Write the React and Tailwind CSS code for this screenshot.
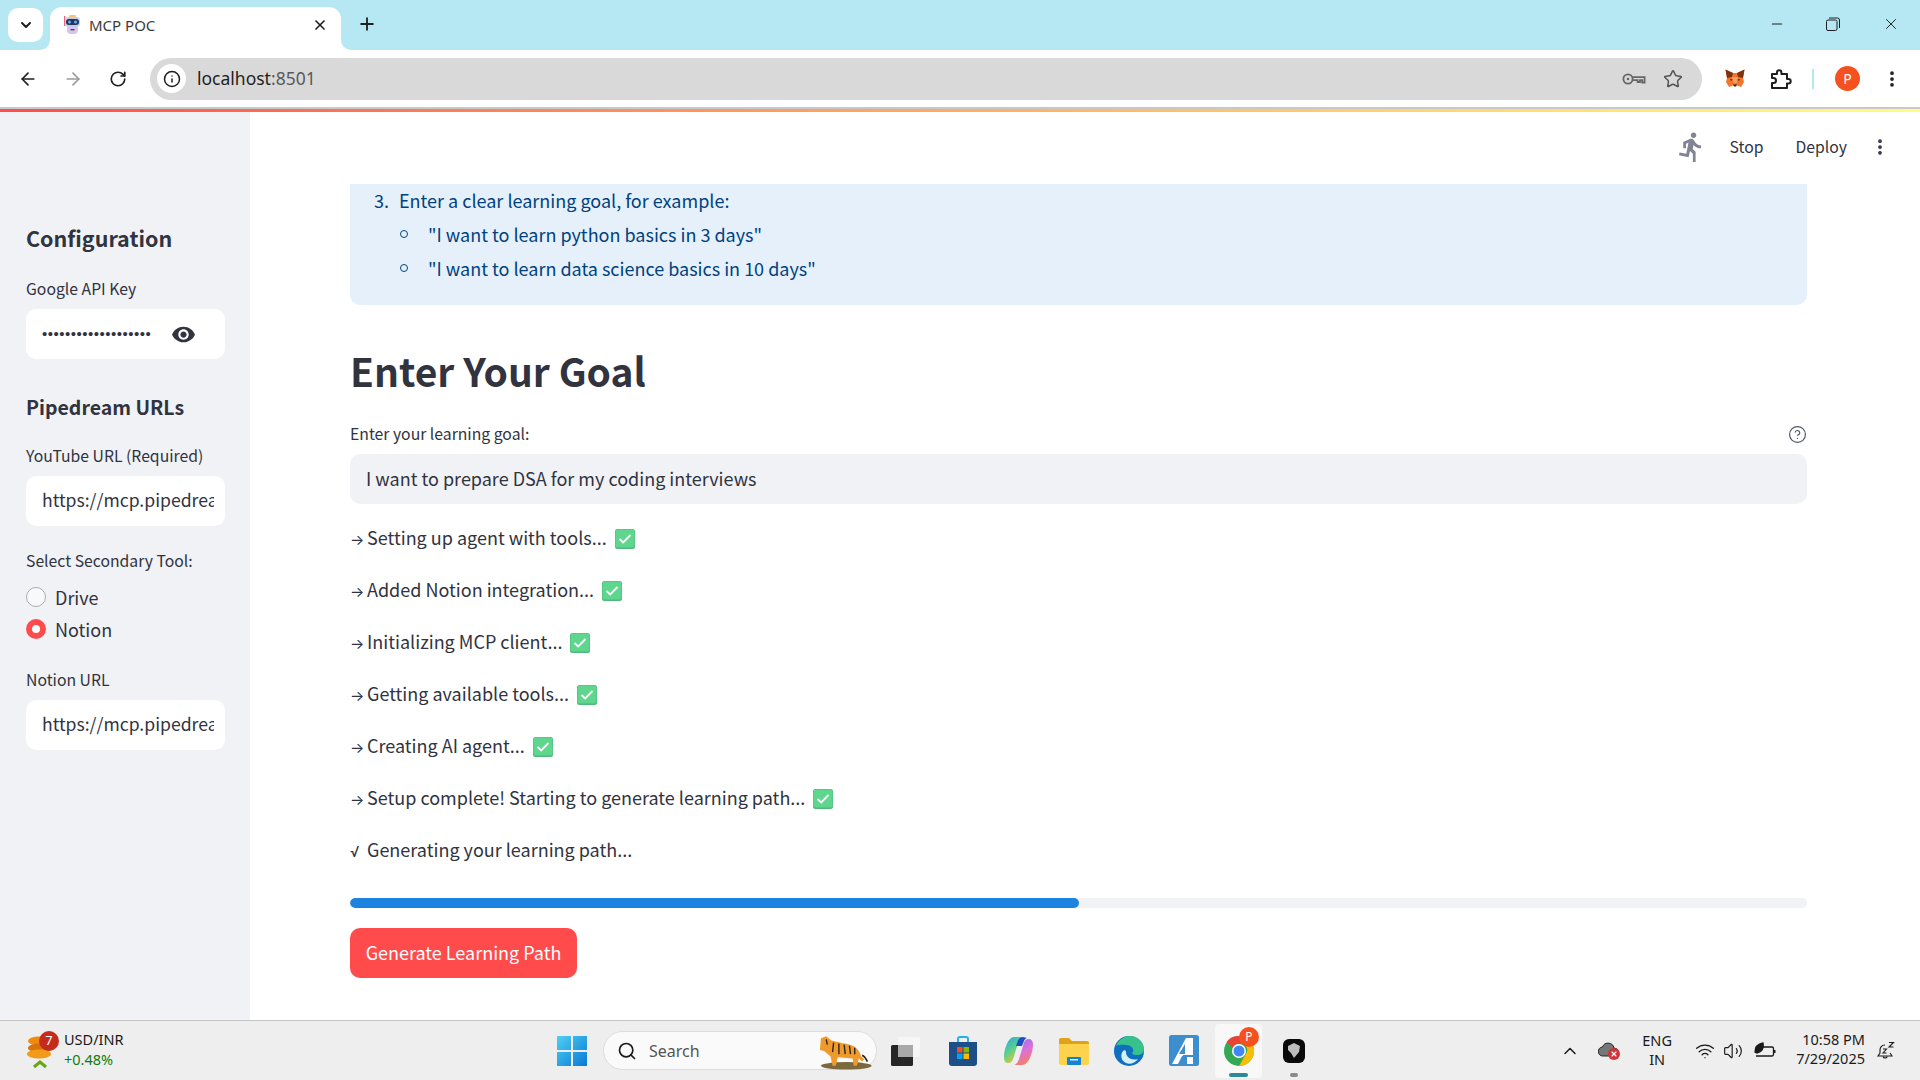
import React from 'react';
import { ArrowLeft, ArrowRight, RotateCw, Info, Star, Plus, X, ChevronDown, ChevronUp, Minus, Search, Wifi, Volume2, EllipsisVertical, CircleHelp } from 'lucide-react';

const STEPS = [
  'Setting up agent with tools...',
  'Added Notion integration...',
  'Initializing MCP client...',
  'Getting available tools...',
  'Creating AI agent...',
  'Setup complete! Starting to generate learning path...',
];

// ---------- small drawings ----------
const Robot = () => (
  <svg width="18" height="20" viewBox="0 0 18 20">
    <rect x="1" y="1" width="1.4" height="10" fill="#e86a7a" />
    <rect x="6" y="0" width="7" height="2" rx="1" fill="#f4c76a" />
    <rect x="2" y="2" width="15" height="10" rx="4" fill="#c9c9e8" />
    <rect x="3" y="4" width="13" height="6" rx="3" fill="#26345c" />
    <circle cx="6.5" cy="7" r="1.5" fill="#58b7f0" />
    <circle cx="12.5" cy="7" r="1.5" fill="#58b7f0" />
    <path d="M4 12h11v3a4 4 0 0 1-4 4H8a4 4 0 0 1-4-4z" fill="#d8c4ec" />
    <rect x="7.5" y="14" width="4" height="1.4" fill="#4a4a70" />
  </svg>
);

const KeyIcon = () => (
  <svg width="24" height="16" viewBox="0 0 24 16" fill="none" stroke="#666" strokeWidth="1.8">
    <circle cx="6" cy="8" r="4.6" />
    <circle cx="6" cy="8" r="1.3" fill="#666" stroke="none" />
    <path d="M10.6 6.2H22.6V11.5H20.2V9.2H18V11H15.6V9.2H10.6" />
  </svg>
);

const Fox = () => (
  <svg width="20" height="19" viewBox="0 0 20 19">
    <path d="M0.5 0.5 8 4h4l7.5-3.500L18 9l1 4-3 5-4-1.500H8L4 18l-3-5 1-4z" fill="#f6752a" />
    <path d="M0.5 0.5 8 4 7 8 2 9zM19.500 0.5 12 4l1 4 5 1z" fill="#7b3410" />
    <path d="M7 8h6l-1.500 6h-3z" fill="#f9a25f" />
    <path d="M5 10l2.500 0.500-1.500 1.500zM15 10l-2.500 0.500 1.500 1.500z" fill="#3a2412" />
    <path d="M8 15.500h4L11 17.500H9z" fill="#2b2b2b" />
  </svg>
);

const Puzzle = () => (
  <svg width="22" height="22" viewBox="0 0 22 22" fill="none" stroke="#1f1f1f" strokeWidth="2" strokeLinejoin="round">
    <path d="M2 6h5V4.500a2.200 2.200 0 0 1 4.400 0V6H17v5h1.500a2.200 2.200 0 0 1 0 4.400H17V20H2v-5h1.500a2.500 2.500 0 0 0 0-5H2z" />
  </svg>
);

const RestoreIcon = () => (
  <svg width="14" height="14" viewBox="0 0 14 14" fill="none" stroke="#1f1f1f" strokeWidth="1">
    <rect x="0.500" y="3" width="10.500" height="10.500" rx="1.500" />
    <path d="M3 1h8.500a2 2 0 0 1 2 2v8" />
  </svg>
);

const EyeIcon = () => (
  <svg width="25" height="25" viewBox="0 0 24 24" fill="#31333f">
    <path d="M12 4.500C7 4.500 2.730 7.610 1 12c1.730 4.390 6 7.500 11 7.500s9.270-3.110 11-7.500c-1.730-4.390-6-7.500-11-7.500zM12 17c-2.760 0-5-2.240-5-5s2.240-5 5-5 5 2.240 5 5-2.240 5-5 5zm0-8c-1.660 0-3 1.340-3 3s1.340 3 3 3 3-1.340 3-3-1.340-3-3-3z" />
  </svg>
);

const RunIcon = () => (
  <svg width="33" height="36" viewBox="0 0 24 24" fill="#808495">
    <path d="M13.490 5.480c1.100 0 2-.9 2-2s-.9-2-2-2-2 .9-2 2 .9 2 2 2zm-3.600 13.900l1-4.400 2.100 2v6h2v-7.500l-2.100-2 .6-3c1.300 1.500 3.300 2.500 5.500 2.500v-2c-1.900 0-3.500-1-4.300-2.400l-1-1.600c-.4-.6-1-1-1.700-1-.3 0-.5.1-.8.1l-5.200 2.200v4.700h2v-3.400l1.800-.7-1.600 8.100-4.900-1-.4 2 7 1.400z" />
  </svg>
);

const CheckBox = () => (
  <svg width="20" height="20" viewBox="0 0 20 20" className="shrink-0">
    <rect width="20" height="20" rx="2.500" fill="#4fb87c" />
    <rect x="0.500" y="0.500" width="19" height="18" rx="2" fill="#5fd68d" />
    <path d="M4.500 10l3.700 3.500 7.300-7.500" fill="none" stroke="#fff" strokeWidth="1.800" />
  </svg>
);

const Coins = () => (
  <svg width="30" height="36" viewBox="0 0 30 36">
    <ellipse cx="13" cy="8" rx="11" ry="4.500" fill="#ef8a0c" />
    <ellipse cx="14" cy="15" rx="12" ry="4.500" fill="#d9720a" />
    <ellipse cx="13" cy="21" rx="12" ry="4.500" fill="#f39a18" />
    <path d="M8 34l6-5 6 5" fill="none" stroke="#6aa512" strokeWidth="3" />
  </svg>
);

const WinLogo = () => (
  <svg width="32" height="32" viewBox="0 0 32 32">
    <defs>
      <linearGradient id="winBlue" x1="0" y1="0" x2="1" y2="1">
        <stop offset="0" stopColor="#4fd0f5" />
        <stop offset="1" stopColor="#0a78d4" />
      </linearGradient>
    </defs>
    <path d="M1 1h14v14H1zM17 1h14v14H17zM1 17h14v14H1zM17 17h14v14H17z" fill="url(#winBlue)" />
  </svg>
);

const Tiger = () => (
  <svg width="66" height="38" viewBox="0 0 62 36">
    <ellipse cx="36" cy="32" rx="24" ry="3.500" fill="#7c6a3e" />
    <path d="M12 6l5-2 5 4 12 3c8 1 14 4 16 12l3 3-2 2-3-3-2 7h-3l-1-7-14-1-2 8h-3l-2-9-6-5-4-1z" fill="#ef9a2c" />
    <path d="M24 10l-1 9M29 11l0 10M34 12l1 9M39 13l1 8M44 15l0 6M17 7l1 5" stroke="#2f2416" strokeWidth="1.300" fill="none" />
    <path d="M51 22c3 1 4 4 5 6" stroke="#2f2416" strokeWidth="1.500" fill="none" />
  </svg>
);

const Widgets = () => (
  <svg width="30" height="30" viewBox="0 0 30 30">
    <rect x="1" y="9" width="22" height="21" rx="1.500" fill="#262626" />
    <rect x="8" y="1" width="22" height="20" rx="1.500" fill="#f6f6f6" opacity="0.950" />
    <rect x="8" y="9" width="15" height="12" fill="#a8a8a8" />
  </svg>
);

const StoreIcon = () => (
  <svg width="30" height="32" viewBox="0 0 30 32">
    <path d="M10 7V4a2 2 0 0 1 2-2h6a2 2 0 0 1 2 2v3" fill="none" stroke="#22b4e8" strokeWidth="2" />
    <path d="M1 7h28v21a3 3 0 0 1-3 3H4a3 3 0 0 1-3-3z" fill="#1c4f88" />
    <rect x="9" y="12" width="5.500" height="5.500" fill="#f25022" />
    <rect x="15.500" y="12" width="5.500" height="5.500" fill="#7fba00" />
    <rect x="9" y="18.500" width="5.500" height="5.500" fill="#00a4ef" />
    <rect x="15.500" y="18.500" width="5.500" height="5.500" fill="#ffb900" />
  </svg>
);

const Copilot = () => (
  <svg width="30" height="30" viewBox="0 0 30 30">
    <defs>
      <linearGradient id="copA" x1="0" y1="0" x2="0.600" y2="1">
        <stop offset="0" stopColor="#1fa8e8" />
        <stop offset="0.550" stopColor="#5fd08a" />
        <stop offset="1" stopColor="#f4c22c" />
      </linearGradient>
      <linearGradient id="copB" x1="0.300" y1="0" x2="0.700" y2="1">
        <stop offset="0" stopColor="#9a6ff0" />
        <stop offset="0.500" stopColor="#e070d8" />
        <stop offset="1" stopColor="#f6824a" />
      </linearGradient>
    </defs>
    <path d="M11 1h9c-3 1-4 3-5 6l-4 13c-1 4-2 7-6 7-3 0-4-3-4-6 0-7 4-20 10-20z" fill="url(#copA)" />
    <path d="M19 29h-8c3-1 4-3 5-6l4-13c1-4 2-7 6-7 2 0 4 2 4 5 0 8-4 21-11 21z" fill="url(#copB)" />
    <path d="M20 1c-3 0-5 2-6 6l-1 3h6l2-5c1-2 2-3 3-3z" fill="#1d4fc4" />
  </svg>
);

const Folder = () => (
  <svg width="30" height="28" viewBox="0 0 30 28">
    <path d="M0 3a2 2 0 0 1 2-2h8l3 3h15a2 2 0 0 1 2 2v4H0z" fill="#e0a218" />
    <path d="M0 7h30v19a2 2 0 0 1-2 2H2a2 2 0 0 1-2-2z" fill="#fcd34d" />
    <rect x="8" y="20" width="14" height="8" rx="1" fill="#1283d4" />
    <rect x="11" y="22" width="8" height="1.500" fill="#d8eefc" />
  </svg>
);

const Edge = () => (
  <svg width="30" height="30" viewBox="0 0 30 30">
    <circle cx="15" cy="15" r="15" fill="#0f6fc0" />
    <path d="M2 10C5 3 11 0 16 0c8 0 14 6 14 13 0 4-3 6-7 6-3 0-5-1-5-2 2-1 2-5-2-7C10 8 4 9 2 10z" fill="#37c28c" />
    <path d="M12 16c0 5 5 9 12 7-3 4-8 6-12 4-5-2-6-8-3-12 1-1 3-1 3 1z" fill="#d6f0fa" />
  </svg>
);

const AApp = () => (
  <svg width="30" height="31" viewBox="0 0 30 31">
    <rect width="30" height="31" rx="2.500" fill="#3d8ecf" />
    <path d="M3 29L17 3h7v26h-6v-8l-5 0-4 8z" fill="#fff" />
    <path d="M16 9l-6 10h6z" fill="#3d8ecf" />
    <path d="M14 20h12v2H14z" fill="#3d8ecf" />
  </svg>
);

const ChromeIcon = () => (
  <svg width="30" height="30" viewBox="0 0 30 30">
    <circle cx="15" cy="15" r="15" fill="#34a853" />
    <path d="M15 0a15 15 0 0 1 13 7.500H15a7.500 7.500 0 0 0-6.500 3.750L2.500 6A15 15 0 0 1 15 0z" fill="#ea4335" />
    <path d="M28 7.500A15 15 0 0 1 15 30l6.500-11.250A7.500 7.500 0 0 0 22 10z" fill="#fbbc04" />
    <circle cx="15" cy="15" r="7" fill="#fff" />
    <circle cx="15" cy="15" r="5.500" fill="#4285f4" />
  </svg>
);

const BlackApp = () => (
  <svg width="24" height="26" viewBox="0 0 24 26">
    <rect x="1" y="1" width="22" height="24" rx="6" fill="#0a0a0a" />
    <path d="M6 8l6-3 6 3-1 6-5 6-3-5-3-3z" fill="#bdbdbd" />
  </svg>
);

const CloudOff = () => (
  <span className="relative block w-[22px] h-[18px]">
    <svg width="20" height="15" viewBox="0 0 20 15">
      <path d="M5 14a4.500 4.500 0 0 1-.5-9A6 6 0 0 1 16 6a4 4 0 0 1 0 8z" fill="#777" stroke="#222" strokeWidth="1" />
    </svg>
    <span className="absolute right-0 bottom-0 w-[12px] h-[12px] rounded-full bg-[#d13438] flex items-center justify-center">
      <X size={8} color="#fff" strokeWidth={3.5} />
    </span>
  </span>
);

const BatteryLeaf = () => (
  <svg width="22" height="18" viewBox="0 0 22 18" fill="none" stroke="#1a1a1a" strokeWidth="1.300">
    <path d="M6 5h12a1.500 1.500 0 0 1 1.500 1.500v6a1.500 1.500 0 0 1-1.500 1.500H2" />
    <rect x="20" y="8" width="1.500" height="3" fill="#1a1a1a" stroke="none" />
    <path d="M1 10C1 5 4 2 9 1c1 5-1 9-6 10z" fill="#1a1a1a" />
  </svg>
);

const BellZ = () => (
  <svg width="20" height="20" viewBox="0 0 20 20" fill="none" stroke="#1a1a1a" strokeWidth="1.100">
    <path d="M9 4C5.500 4 4 6.500 4 9v3l-2 3h14l-2-3" />
    <path d="M7 15.500a2.200 2.200 0 0 0 4.200 0" />
    <path d="M7 8h3.500L7 12h3.500M13 1.500h4.500L13 6h4.500" />
  </svg>
);

// ---------- chrome ----------
const TabFlare = ({ side }) => (
  <svg
    width="10"
    height="10"
    viewBox="0 0 10 10"
    className={side === 'left' ? 'absolute bottom-0 -left-[10px]' : 'absolute bottom-0 -right-[10px]'}
  >
    <path d={side === 'left' ? 'M10 0v10H0a10 10 0 0 0 10-10z' : 'M0 0v10h10A10 10 0 0 1 0 0z'} fill="#fff" />
  </svg>
);

const BrowserChrome = () => (
  <div className="shrink-0">
    <div className="h-[50px] bg-[#b5e8f2] flex items-end pl-2 text-[#1f1f1f]">
      <div className="w-[35px] h-[34px] mb-2 bg-white rounded-[10px] flex items-center justify-center">
        <ChevronDown size={16} strokeWidth={3} />
      </div>
      <div className="relative ml-[7px] w-[291px] h-[43px] bg-white rounded-t-[12px] flex items-center pl-[13px] pr-[13px] pb-[7px]">
        <TabFlare side="left" />
        <TabFlare side="right" />
        <Robot />
        <span className="ml-[8px] text-[15px] text-[#3c3c3c] font-['Noto_Sans',sans-serif]">MCP POC</span>
        <X size={16} strokeWidth={2.5} className="ml-auto" />
      </div>
      <Plus size={20} strokeWidth={2.2} className="ml-[16px] mb-[16px]" />
      <div className="ml-auto flex items-center h-[48px] self-start text-[#1f1f1f]">
        <Minus size={16} strokeWidth={1.6} className="mr-[41px]" />
        <RestoreIcon />
        <X size={18} strokeWidth={1.3} className="ml-[42px] mr-[20px]" />
      </div>
    </div>
    <div className="h-[57px] bg-white flex items-center pl-[18px] pr-[18px] rounded-t-[10px]">
      <ArrowLeft size={20} strokeWidth={2} color="#1f1f1f" />
      <ArrowRight size={20} strokeWidth={2} color="#9a9a9a" className="ml-[25px]" />
      <RotateCw size={18} strokeWidth={2.2} color="#1f1f1f" className="ml-[26px]" />
      <div className="ml-[23px] h-[42px] w-[1552px] bg-[#d9d9d9] rounded-full flex items-center pl-[7px] pr-[19px]">
        <div className="w-[29px] h-[29px] rounded-full bg-white flex items-center justify-center">
          <Info size={18} strokeWidth={2} color="#1f1f1f" />
        </div>
        <span className="ml-[11px] text-[17.5px] text-[#1f1f1f] font-['Noto_Sans',sans-serif]">
          localhost<span className="text-[#5a5a5a]">:8501</span>
        </span>
        <div className="ml-auto flex items-center gap-[17px]">
          <KeyIcon />
          <Star size={20} strokeWidth={1.8} color="#555" />
        </div>
      </div>
      <div className="ml-[23px]"><Fox /></div>
      <div className="ml-[25px]"><Puzzle /></div>
      <div className="ml-[20px] w-[2px] h-[20px] bg-[#b5e8f2]" />
      <div className="ml-[21px] w-[25px] h-[25px] rounded-full bg-[#f4511e] text-white text-[14px] flex items-center justify-center font-['Noto_Sans',sans-serif]">P</div>
      <EllipsisVertical size={20} strokeWidth={2.5} color="#1f1f1f" className="ml-[22px]" />
    </div>
    <div className="h-[2px] bg-[#c8c8c8]" />
    <div className="h-[3px] bg-gradient-to-r from-[#ff4b4b] to-[#fffd80]" />
  </div>
);

// ---------- streamlit sidebar ----------
const SideLabel = ({ children, className = '' }) => (
  <div className={`text-[15.75px] leading-[24px] text-[#31333f] ${className}`}>{children}</div>
);

const SideInput = ({ value }) => (
  <div className="mt-[8px] w-[199px] h-[50px] bg-white rounded-[10px] flex items-center pl-4 pr-[11px] pb-[2px]">
    <input readOnly value={value} className="w-full bg-transparent outline-none text-[17.6px] text-[#31333f]" />
  </div>
);

const Sidebar = () => (
  <aside className="w-[250px] shrink-0 bg-[#f0f2f6] pl-[26px] pt-[111px]">
    <h2 className="text-[21.500px] leading-[30px] font-semibold text-[#31333f]">Configuration</h2>
    <SideLabel className="mt-[24px]">Google API Key</SideLabel>
    <div className="mt-[8px] w-[199px] h-[50px] bg-white rounded-[10px] flex items-center pl-4 text-[#31333f]">
      <span className="w-[110px] text-[15px] tracking-[0.5px] overflow-hidden whitespace-nowrap font-['Liberation_Sans',sans-serif]">•••••••••••••••••••</span>
      <span className="ml-[19px]"><EyeIcon /></span>
    </div>
    <h3 className="mt-[33px] text-[19.500px] leading-[30px] font-semibold text-[#31333f]">Pipedream URLs</h3>
    <SideLabel className="mt-[22px]">YouTube URL (Required)</SideLabel>
    <SideInput value="https://mcp.pipedream.net/abc" />
    <SideLabel className="mt-[23px]">Select Secondary Tool:</SideLabel>
    <div className="mt-[12px] flex flex-col gap-[8px] text-[18px] leading-[24px] text-[#31333f]">
      <div className="flex items-center gap-[9px]">
        <span className="w-[20px] h-[20px] rounded-full bg-[#f8f9fb] border border-[#a9abb3]" />
        Drive
      </div>
      <div className="flex items-center gap-[9px]">
        <span className="w-[20px] h-[20px] rounded-full bg-[#ff4b4b] flex items-center justify-center">
          <span className="w-[8px] h-[8px] rounded-full bg-white" />
        </span>
        Notion
      </div>
    </div>
    <SideLabel className="mt-[27px]">Notion URL</SideLabel>
    <SideInput value="https://mcp.pipedream.net/abc" />
  </aside>
);

// ---------- main column ----------
const Step = ({ text, mark = '→', done = true }) => (
  <div className="h-[52px] flex items-center gap-[8px] text-[18px] text-[#31333f]">
    <span className="pb-[2px]">
      <span className="inline-block w-[17px] text-[15px] font-['Inter',sans-serif]">{mark}</span>
      {text}
    </span>
    {done && <CheckBox />}
  </div>
);

const Main = () => (
  <main className="flex-1 min-w-0 bg-white">
    <div className="h-[72px] flex items-center justify-end text-[15.750px] text-[#31333f] pr-[30px] pb-[2px]">
      <RunIcon />
      <span className="ml-[22px]">Stop</span>
      <span className="ml-[32px]">Deploy</span>
      <EllipsisVertical size={20} strokeWidth={2.500} className="ml-[23px]" />
    </div>
    <div className="ml-[100px] mr-[113px]">
      <div className="h-[121px] flex flex-col bg-[#e6f0fb] rounded-b-[10px] text-[18px] leading-[34px] text-[#004280] pl-[24px]">
        <div className="flex -mt-[1px]">
          <span className="w-[18px]">3.</span>
          <span className="ml-[7px]">Enter a clear learning goal, for example:</span>
        </div>
        <ul className="pl-[26px]">
          <li className="flex items-center">
            <span className="w-[8px] h-[8px] rounded-full border border-[#004280]" />
            <span className="ml-[20px]">"I want to learn python basics in 3 days"</span>
          </li>
          <li className="flex items-center">
            <span className="w-[8px] h-[8px] rounded-full border border-[#004280]" />
            <span className="ml-[20px]">"I want to learn data science basics in 10 days"</span>
          </li>
        </ul>
      </div>
      <h1 className="mt-[37px] text-[39px] leading-[56px] font-semibold text-[#31333f]">Enter Your Goal</h1>
      <div className="mt-[24px] flex items-center justify-between h-[24px] text-[15.750px] text-[#31333f]">
        <span>Enter your learning goal:</span>
        <CircleHelp size={19} strokeWidth={1.500} color="#555867" />
      </div>
      <div className="mt-[8px] h-[50px] bg-[#f0f2f6] rounded-[10px] flex items-center px-4 pb-[2px]">
        <input readOnly value="I want to prepare DSA for my coding interviews" className="w-full bg-transparent outline-none text-[18px] text-[#31333f]" />
      </div>
      <div className="mt-[9px]">
        {STEPS.map((s) => <Step key={s} text={s} />)}
        <Step text="Generating your learning path..." mark="√" done={false} />
      </div>
      <div className="mt-[21px] h-[10px] rounded-full bg-[#f0f2f6] overflow-hidden">
        <div className="h-full w-1/2 rounded-full bg-[#1c83e1]" />
      </div>
      <button className="mt-[20px] w-[227px] h-[50px] rounded-[10px] bg-[#ff4b4b] text-white text-[18px] pb-[2px]">
        Generate Learning Path
      </button>
    </div>
  </main>
);

// ---------- taskbar ----------
const Taskbar = () => (
  <div className="h-[60px] shrink-0 bg-[#eeeeee] border-t border-[#c4c4c4] flex items-center font-['Noto_Sans',sans-serif] text-[#1a1a1a]">
    <div className="w-[545px] flex items-center pl-[26px]">
      <div className="relative w-[30px] h-[36px]">
        <Coins />
        <span className="absolute -top-[2px] -right-[3px] w-[20px] h-[20px] rounded-full bg-[#c42b1c] text-white text-[13px] flex items-center justify-center">7</span>
      </div>
      <div className="ml-[8px] text-[14.500px] leading-[20px] -mt-[4px]">
        <div>USD/INR</div>
        <div className="text-[#107c10]">+0.48%</div>
      </div>
    </div>
    <div className="ml-[11px]"><WinLogo /></div>
    <div className="relative ml-[15px] w-[274px] h-[39px] rounded-full bg-[#fafafa] border border-[#dcdcdc] flex items-center pl-[13px]">
      <Search size={20} strokeWidth={2} />
      <span className="ml-[12px] text-[16px] text-[#555]">Search</span>
      <span className="absolute right-[2px] top-0"><Tiger /></span>
    </div>
    <div className="ml-[13px] w-[30px]"><Widgets /></div>
    <div className="ml-[28px] w-[30px]"><StoreIcon /></div>
    <div className="ml-[25px] w-[30px]"><Copilot /></div>
    <div className="ml-[26px] w-[30px]"><Folder /></div>
    <div className="ml-[25px] w-[30px]"><Edge /></div>
    <div className="ml-[25px] w-[30px]"><AApp /></div>
    <div className="relative ml-[16px] w-[47px] h-[54px] rounded-[4px] bg-[#f8f8f8] flex items-center justify-center">
      <ChromeIcon />
      <span className="absolute top-[3px] right-[3px] w-[20px] h-[20px] rounded-full bg-[#f4511e] text-white text-[12px] flex items-center justify-center">P</span>
      <span className="absolute bottom-[1px] left-[14px] w-[19px] h-[4px] rounded-full bg-[#2b8a9a]" />
    </div>
    <div className="relative ml-[20px] w-[24px] h-[54px] flex items-center">
      <BlackApp />
      <span className="absolute bottom-[1px] left-[8px] w-[8px] h-[4px] rounded-full bg-[#8a8a8a]" />
    </div>
    <div className="ml-auto flex items-center pr-[24px]">
      <ChevronUp size={20} strokeWidth={1.800} />
      <div className="ml-[18px]"><CloudOff /></div>
      <div className="ml-[19px] w-[36px] text-center text-[14.500px] leading-[19px] -mt-[2px]">
        <div>ENG</div>
        <div>IN</div>
      </div>
      <Wifi size={20} strokeWidth={1.600} className="ml-[20px]" />
      <Volume2 size={20} strokeWidth={1.400} className="ml-[8px]" />
      <div className="ml-[11px]"><BatteryLeaf /></div>
      <div className="ml-[20px] text-right text-[14.500px] leading-[19px] -mt-[4px]">
        <div>10:58 PM</div>
        <div>7/29/2025</div>
      </div>
      <div className="ml-[11px]"><BellZ /></div>
    </div>
  </div>
);

export default function App() {
  return (
    <div className="h-screen flex flex-col overflow-hidden bg-white font-['Noto_Sans_CJK_SC','Noto_Sans',sans-serif]">
      <BrowserChrome />
      <div className="flex-1 min-h-0 flex">
        <Sidebar />
        <Main />
      </div>
      <Taskbar />
    </div>
  );
}
